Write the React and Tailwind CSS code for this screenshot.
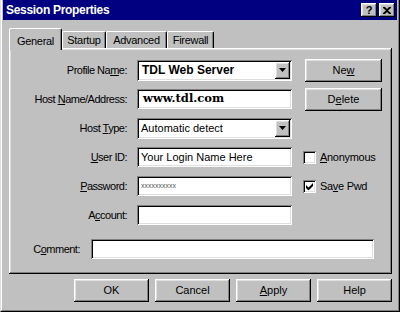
import { useState } from 'react'

const raised = 'shadow-[inset_-1px_-1px_#000,inset_1px_1px_#fff,inset_-2px_-2px_#808080,inset_2px_2px_#dfdfdf]'
const sunken = 'shadow-[inset_1px_1px_#808080,inset_-1px_-1px_#fff,inset_2px_2px_#000,inset_-2px_-2px_#dfdfdf]'

function Button({ children, className = '' }) {
  return (
    <div className={`flex items-center justify-center bg-[#c0c0c0] text-[11px] text-black ${raised} ${className}`}>
      {children}
    </div>
  )
}

function Field({ children, className = 'w-[155px]' }) {
  return (
    <div className={`relative flex h-[20px] items-center overflow-hidden bg-white pl-[4px] text-[11px] text-black ${sunken} ${className}`}>
      {children}
    </div>
  )
}

function Combo({ children }) {
  return (
    <div className={`relative flex h-[21px] w-[155px] items-center bg-white pl-[4px] text-black ${sunken}`}>
      {children}
      {/* drop-down arrow button */}
      <div className={`absolute right-[2px] top-[2px] flex h-[17px] w-[15px] items-center justify-center bg-[#c0c0c0] ${raised}`}>
        <svg width="7" height="4" viewBox="0 0 7 4">
          <path d="M0 0h7L3.5 4z" fill="#000" />
        </svg>
      </div>
    </div>
  )
}

function Label({ children, className = 'w-[116px]' }) {
  return <div className={`shrink-0 text-right text-[11px] tracking-[-0.5px] text-black ${className}`}>{children}</div>
}

function Checkbox({ checked, children }) {
  return (
    <div className="ml-[11px] flex items-center gap-[4px] text-[11px] tracking-[-0.3px] text-black">
      <div className={`flex h-[13px] w-[13px] items-center justify-center bg-white ${sunken}`}>
        {checked && (
          <svg width="7" height="7" viewBox="0 0 7 7">
            <path d="M0 2v3l2 2h1l4-4V0L2.5 4.5z" fill="#000" />
          </svg>
        )}
      </div>
      <span>{children}</span>
    </div>
  )
}

export default function App() {
  const [tab] = useState('General')
  const tabs = [
    { name: 'General', w: 'w-[53px]' },
    { name: 'Startup', w: 'w-[44px]' },
    { name: 'Advanced', w: 'w-[61px]' },
    { name: 'Firewall', w: 'w-[47px]' },
  ]

  return (
    <div className="h-[312px] w-[400px] border-x border-b border-l-[#dfdfdf] border-r-black border-b-black bg-[#c0c0c0] font-['Liberation_Sans',Arial,sans-serif]">
      <div className="flex h-full flex-col border-x border-b border-l-white border-r-[#808080] border-b-[#808080] px-[1px]">
        {/* Title bar */}
        <div className="flex h-[20px] shrink-0 items-center justify-between bg-[#000080] pl-[3px] pr-[2px]">
          <span className="text-[12px] font-bold tracking-[-0.3px] text-white">Session Properties</span>
          <div className="flex gap-[2px]">
            <Button className="h-[14px] w-[16px] text-[11px] font-bold leading-none">?</Button>
            <Button className="h-[14px] w-[16px]">
              <svg width="8" height="7" viewBox="0 0 8 7">
                <path d="M0 0h2l2 2 2-2h2v1L5 3.5 8 6v1H6L4 5 2 7H0V6l3-2.5L0 1z" fill="#000" />
              </svg>
            </Button>
          </div>
        </div>

        {/* Tabs */}
        <div className="ml-[6px] mt-[8px] flex h-[20px] items-end">
          {tabs.map((t) =>
            t.name === tab ? (
              <div
                key={t.name}
                className={`relative z-10 -mb-[2px] flex h-[22px] items-start justify-center rounded-t-[2px] border-l border-t border-r border-l-white border-t-white border-r-black bg-[#c0c0c0] pt-[4px] text-[11px] tracking-[-0.3px] text-black shadow-[inset_-1px_0_#808080] ${t.w}`}
              >
                {t.name}
              </div>
            ) : (
              <div
                key={t.name}
                className={`flex h-[17px] items-center justify-center rounded-t-[2px] border-l border-t border-r border-l-white border-t-white border-r-black bg-[#c0c0c0] pt-[1px] text-[11px] tracking-[-0.3px] text-black shadow-[inset_-1px_0_#808080] ${t.w}`}
              >
                {t.name}
              </div>
            )
          )}
        </div>

        {/* Panel */}
        <div className={`ml-[6px] flex h-[226px] w-[383px] flex-col gap-[9px] bg-[#c0c0c0] pl-[2px] pt-[12px] ${raised}`}>
          <div className="flex h-[20px] items-center">
            <Label>
              Profile Na<u>m</u>e:
            </Label>
            <div className="ml-[10px]">
              <Combo>
                <span className="pl-[1px] text-[12px] font-bold">TDL Web Server</span>
              </Combo>
            </div>
            <Button className="ml-[13px] h-[23px] w-[77px] shrink-0">
              Ne<u>w</u>
            </Button>
          </div>

          <div className="flex h-[20px] items-center">
            <Label>
              Host <u>N</u>ame/Address:
            </Label>
            <div className="ml-[10px]">
              <Field>
                <span className="pl-[2px] font-['DejaVu_Serif',Georgia,serif] text-[11.5px] font-bold">
                  www.tdl.com
                </span>
              </Field>
            </div>
            <Button className="ml-[13px] h-[23px] w-[77px] shrink-0">
              D<u>e</u>lete
            </Button>
          </div>

          <div className="flex h-[20px] items-center">
            <Label>
              Host <u>T</u>ype:
            </Label>
            <div className="ml-[10px]">
              <Combo>
                <span className="text-[11px]">Automatic detect</span>
              </Combo>
            </div>
          </div>

          <div className="flex h-[20px] items-center">
            <Label>
              <u>U</u>ser ID:
            </Label>
            <div className="ml-[10px]">
              <Field>Your Login Name Here</Field>
            </div>
            <Checkbox>
              <u>A</u>nonymous
            </Checkbox>
          </div>

          <div className="flex h-[20px] items-center">
            <Label>
              <u>P</u>assword:
            </Label>
            <div className="ml-[10px]">
              <Field>
                <span className="text-[7px] text-[#555]">xxxxxxxxxx</span>
              </Field>
            </div>
            <Checkbox checked>
              Sa<u>v</u>e Pwd
            </Checkbox>
          </div>

          <div className="flex h-[20px] items-center">
            <Label>
              A<u>c</u>count:
            </Label>
            <div className="ml-[10px]">
              <Field />
            </div>
          </div>

          <div className="mt-[5px] flex h-[20px] items-center">
            <Label className="w-[69px]">
              C<u>o</u>mment:
            </Label>
            <div className="ml-[11px]">
              <Field className="w-[283px]" />
            </div>
          </div>
        </div>

        {/* Dialog buttons */}
        <div className="mt-[5px] flex justify-end gap-[6px] pr-[5px]">
          <Button className="h-[23px] w-[75px]">OK</Button>
          <Button className="h-[23px] w-[75px]">Cancel</Button>
          <Button className="h-[23px] w-[75px]">
            <u>A</u>pply
          </Button>
          <Button className="h-[23px] w-[75px]">Help</Button>
        </div>
      </div>
    </div>
  )
}
